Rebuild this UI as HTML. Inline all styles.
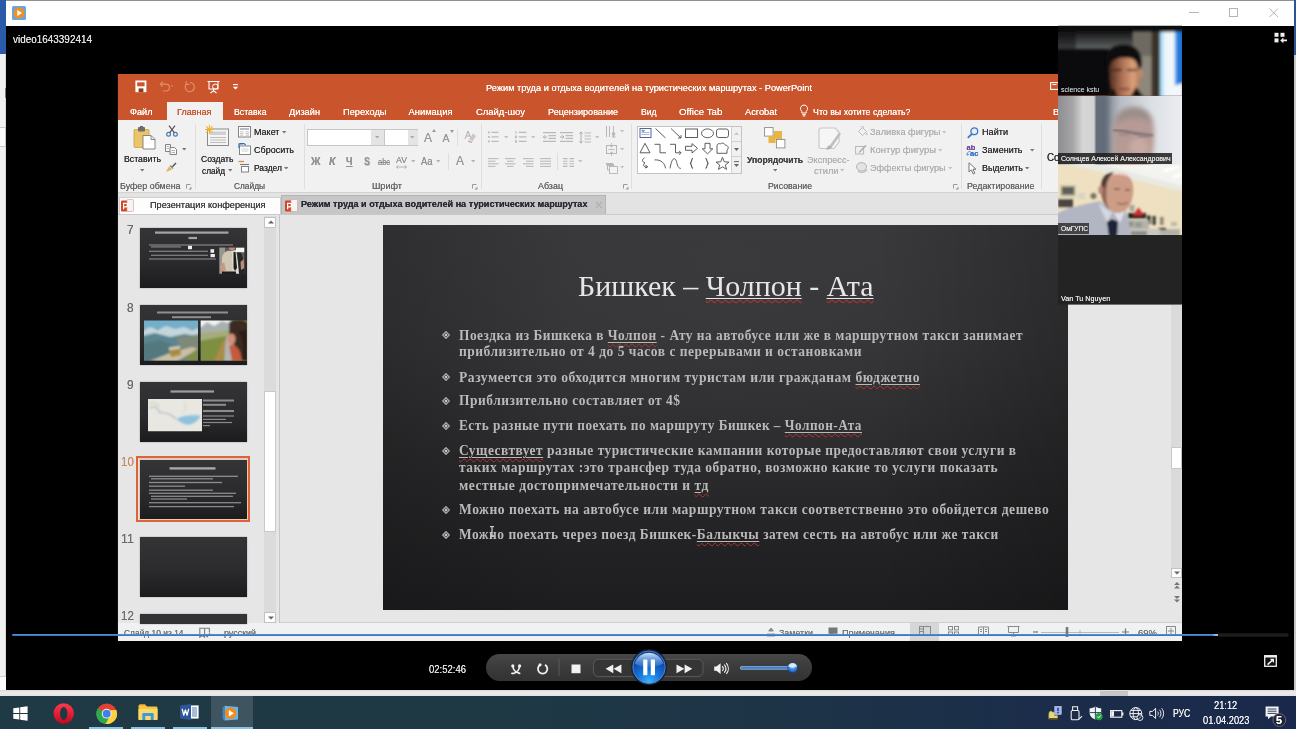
<!DOCTYPE html>
<html lang="ru"><head><meta charset="utf-8"><title>video1643392414</title>
<style>
html,body{margin:0;padding:0;background:#000;}
body{width:1296px;height:729px;overflow:hidden;position:relative;font-family:"Liberation Sans",sans-serif;}
.a{position:absolute;display:block;}
.t{position:absolute;white-space:pre;line-height:1;transform-origin:0 0;font-family:"Liberation Sans",sans-serif;}
.t{text-shadow:0 0 0.35px currentColor;}
.f{font-family:"Liberation Serif",serif;text-shadow:none;}
</style></head>
<body>
<!-- frame -->
<div class="a" style="left:0px;top:0px;width:1296px;height:1px;background:#8b9098;"></div>
<div class="a" style="left:6px;top:1px;width:1288px;height:24.5px;background:#ffffff;"></div>
<div class="a" style="left:0px;top:0px;width:6px;height:54px;background:#2a5ba8;"></div>
<div class="a" style="left:0px;top:54px;width:6px;height:642px;background:#f0f0f0;"></div>
<div class="a" style="left:5px;top:54px;width:1px;height:636px;background:#d8d8d8;"></div>
<div class="a" style="left:1294px;top:0px;width:2px;height:55px;background:#2a5597;"></div>
<div class="a" style="left:1294px;top:55px;width:2px;height:641px;background:#c4c7cc;"></div>
<div class="a" style="left:6px;top:25.5px;width:1288px;height:664.5px;background:#000;"></div>
<div class="a" style="left:0px;top:690px;width:1296px;height:6px;background:linear-gradient(180deg,#d9d9d9 0%,#ececec 45%,#e4e4e4 100%);"></div>
<div class="a" style="left:1100px;top:690.5px;width:28px;height:5px;background:#c6c6c6;"></div>
<div class="a" style="left:4.6px;top:88px;width:1.4px;height:10px;background:#7a7a7a;"></div>
<div class="a" style="left:0px;top:676px;width:5.5px;height:14px;background:#fbfbfb;border-top:1px solid #cfcfcf;box-sizing:border-box;"></div>
<div class="a" style="left:0px;top:127px;width:5.5px;height:20px;background:#fafafa;border:1px solid #c8c8c8;border-left:0;box-sizing:border-box;"></div>
<svg class="a" style="left:12px;top:6px;" width="14" height="14" viewBox="0 0 14 14"><rect x="0" y="0" width="14" height="14" rx="1.5" fill="#6fa3dc"/><circle cx="7" cy="7" r="5.4" fill="#f2901f"/><path d="M5.3 4.1 L10 7 L5.3 9.9 Z" fill="#fff"/></svg>
<svg class="a" style="left:1185px;top:5px;" width="100" height="16" viewBox="0 0 100 16"><path d="M4 7.5 H14" stroke="#b4b4b4" stroke-width="1"/><rect x="44.5" y="3.5" width="8" height="8" fill="none" stroke="#b4b4b4" stroke-width="1"/><path d="M84.5 3.5 L93 12 M93 3.5 L84.5 12" stroke="#b4b4b4" stroke-width="1" fill="none"/></svg>
<span id="t0" class="t" style="left:13.00px;top:32.78px;font-size:11.60px;color:#e4e4e4;transform:scaleX(0.8568);">video1643392414</span>
<svg class="a" style="left:1274px;top:32px;" width="14" height="12" viewBox="0 0 14 12"><g fill="#f0f0f0"><rect x="0.5" y="0.8" width="4" height="4"/><rect x="6.5" y="0.8" width="4" height="4"/><rect x="0.5" y="6.4" width="4" height="4"/><path d="M6.2 8.4 L9.4 5.6 V7.5 H13 V9.3 H9.4 V11.2 Z"/></g></svg>
<!-- ppt_chrome -->
<div class="a" style="left:0;top:0;width:1296px;height:729px;filter:blur(0.55px);">
<div class="a" style="left:118px;top:74px;width:1064px;height:567px;background:#e6e6e6;"></div>
<div class="a" style="left:118px;top:74px;width:1064px;height:46px;background:#ca542b;"></div>
<svg class="a" style="left:134.7px;top:79.8px;" width="110" height="15" viewBox="0 0 110 15"><g fill="none" stroke="#fff" stroke-width="1.3">
    <rect x="0.4" y="0.5" width="11" height="11.7" fill="#fff" stroke="none"/><rect x="2.2" y="2.3" width="7.4" height="4" fill="#ca542b" stroke="none"/><rect x="3.6" y="8.4" width="4.8" height="3.8" fill="#8a3c18" stroke="none"/>
    <g stroke="#e08c6c" stroke-width="1.2"><path d="M25.5 4.2 H31 a3.3 3.3 0 0 1 0 6.8 H28"/><path d="M27.8 1.8 L25.3 4.2 L27.8 6.6"/><path d="M36 6 h2" />
    <path d="M55 2.5 a4.6 4.6 0 1 1 -3.8 1.7"/><path d="M51.2 1 V4.4 H54.4"/></g>
    <path d="M72.5 1.5 H84.5 M74 2 V9 H83 V2 M78.5 9 V11 M75.5 13 L78.5 10.8 L81.5 13" stroke-width="1.1"/><circle cx="80.2" cy="6.6" r="2.6" stroke-width="1"/>
    <path d="M98 4.6 H103" stroke-width="1.1"/></g><path d="M97.8 6.8 H103.2 L100.5 9.6 Z" fill="#fff"/></svg>
<span id="t1" class="t" style="left:486.00px;top:84.40px;font-size:9.10px;color:#fff;transform:scaleX(1.0158);">Режим труда и отдыха водителей на туристических маршрутах - PowerPoint</span>
<svg class="a" style="left:1050px;top:82px;" width="9" height="8" viewBox="0 0 9 8"><rect x="0.6" y="0.6" width="7.8" height="6.8" fill="none" stroke="#fff" stroke-width="1.1"/><path d="M2.5 2.6 H6.5" stroke="#fff" stroke-width="1"/></svg>
<div class="a" style="left:167px;top:102px;width:55.5px;height:18px;background:#f1f1f1;"></div>
<span id="t2" class="t" style="left:130.00px;top:107.04px;font-size:9.40px;color:#fff;transform:scaleX(0.9756);">Файл</span>
<span id="t3" class="t" style="left:177.00px;top:107.04px;font-size:9.40px;color:#c4532e;transform:scaleX(0.9667);">Главная</span>
<span id="t4" class="t" style="left:234.00px;top:107.04px;font-size:9.40px;color:#fff;transform:scaleX(0.9323);">Вставка</span>
<span id="t5" class="t" style="left:289.00px;top:107.04px;font-size:9.40px;color:#fff;transform:scaleX(0.9836);">Дизайн</span>
<span id="t6" class="t" style="left:342.50px;top:107.04px;font-size:9.40px;color:#fff;transform:scaleX(0.9890);">Переходы</span>
<span id="t7" class="t" style="left:408.50px;top:107.04px;font-size:9.40px;color:#fff;">Анимация</span>
<span id="t8" class="t" style="left:475.50px;top:107.04px;font-size:9.40px;color:#fff;transform:scaleX(1.0080);">Слайд-шоу</span>
<span id="t9" class="t" style="left:547.50px;top:107.04px;font-size:9.40px;color:#fff;transform:scaleX(0.9670);">Рецензирование</span>
<span id="t10" class="t" style="left:641.00px;top:107.04px;font-size:9.40px;color:#fff;transform:scaleX(0.9134);">Вид</span>
<span id="t11" class="t" style="left:679.00px;top:107.04px;font-size:9.40px;color:#fff;transform:scaleX(1.0340);">Office Tab</span>
<span id="t12" class="t" style="left:745.00px;top:107.04px;font-size:9.40px;color:#fff;transform:scaleX(0.9903);">Acrobat</span>
<span id="t13" class="t" style="left:813.00px;top:107.04px;font-size:9.40px;color:#fff;transform:scaleX(0.9408);">Что вы хотите сделать?</span>
<span id="t14" class="t" style="left:1053.00px;top:107.04px;font-size:9.40px;color:#fff;">В</span>
<svg class="a" style="left:799px;top:104px;" width="10" height="13" viewBox="0 0 10 13"><path d="M5 1 a3.6 3.6 0 0 1 2.2 6.4 V9 H2.8 V7.4 A3.6 3.6 0 0 1 5 1 Z M3.2 10.6 H6.8 M3.8 12 H6.2" fill="none" stroke="#fff" stroke-width="1"/></svg>
<div class="a" style="left:118px;top:120px;width:1064px;height:73px;background:#f1f1f1;"></div>
<div class="a" style="left:118px;top:192px;width:1064px;height:1px;background:#d2d2d2;"></div>
<div class="a" style="left:118px;top:193px;width:1064px;height:22px;background:#e3e3e3;"></div>
<div class="a" style="left:119px;top:196.5px;width:161.5px;height:18px;background:#fdfdfd;border:1px solid #cfcfcf;box-sizing:border-box;"></div>
<div class="a" style="left:280.5px;top:195px;width:325.5px;height:19.5px;background:#c6c6c6;border:1px solid #b4b4b4;box-sizing:border-box;"></div>
<div class="a" style="left:118px;top:214px;width:1064px;height:1px;background:#c9c9c9;"></div>
<svg class="a" style="left:120.5px;top:199px;" width="13" height="14" viewBox="0 0 13 14"><rect x="0" y="1.5" width="9" height="11" rx="1" fill="#d24726"/><rect x="6" y="0.5" width="6.5" height="12" rx="0.8" fill="#f4f4f4" stroke="#d9a090" stroke-width="0.6"/><path d="M2.6 4.3 h2.3 a1.7 1.7 0 0 1 0 3.5 h-2.3 z M2.6 4.3 v6" stroke="#fff" stroke-width="1.2" fill="none"/></svg>
<svg class="a" style="left:285px;top:199px;" width="13" height="14" viewBox="0 0 13 14"><rect x="0" y="1.5" width="9" height="11" rx="1" fill="#d24726"/><rect x="6" y="0.5" width="6.5" height="12" rx="0.8" fill="#f4f4f4" stroke="#d9a090" stroke-width="0.6"/><path d="M2.6 4.3 h2.3 a1.7 1.7 0 0 1 0 3.5 h-2.3 z M2.6 4.3 v6" stroke="#fff" stroke-width="1.2" fill="none"/></svg>
<span id="t15" class="t" style="left:150.00px;top:200.07px;font-size:9.60px;color:#3c3c3c;transform:scaleX(0.9560);">Презентация конференция</span>
<span id="t16" class="t" style="left:300.50px;top:200.41px;font-size:9.20px;color:#2a2a34;font-weight:700;transform:scaleX(0.9893);">Режим труда и отдыха водителей на туристических маршрутах</span>
<svg class="a" style="left:595px;top:201px;" width="8" height="8" viewBox="0 0 8 8"><path d="M1 1 L7 7 M7 1 L1 7" stroke="#b0b0b0" stroke-width="1.2"/></svg>
<div class="a" style="left:118px;top:215px;width:161px;height:408px;background:#e6e6e6;"></div>
<div class="a" style="left:279px;top:215px;width:1px;height:408px;background:#c6c6c6;"></div>
<div class="a" style="left:280px;top:215px;width:902px;height:408px;background:#e6e6e6;"></div>
<div class="a" style="left:280px;top:621.5px;width:902px;height:1px;background:#d0d0d0;"></div>
<div class="a" style="left:264.3px;top:216px;width:11.7px;height:407px;background:#dbdbdb;"></div>
<div class="a" style="left:264.3px;top:216.5px;width:11.7px;height:11px;background:#fdfdfd;border:1px solid #c2c2c2;box-sizing:border-box;"></div>
<svg class="a" style="left:266.5px;top:219px;" width="8" height="6" viewBox="0 0 8 6"><path d="M1 4.5 L4 1.5 L7 4.5 Z" fill="#666"/></svg>
<div class="a" style="left:264.3px;top:391px;width:11.7px;height:141px;background:#ffffff;border:1px solid #c8c8c8;box-sizing:border-box;"></div>
<div class="a" style="left:264.3px;top:611.5px;width:11.7px;height:11px;background:#fdfdfd;border:1px solid #c2c2c2;box-sizing:border-box;"></div>
<svg class="a" style="left:266.5px;top:614.5px;" width="8" height="6" viewBox="0 0 8 6"><path d="M1 1.5 L4 4.5 L7 1.5 Z" fill="#666"/></svg>
<div class="a" style="left:1170.5px;top:305px;width:11.5px;height:272px;background:#dadada;"></div>
<div class="a" style="left:1170.5px;top:447px;width:11.5px;height:22px;background:#ffffff;border:1px solid #c8c8c8;box-sizing:border-box;"></div>
<div class="a" style="left:1170.5px;top:568px;width:11.5px;height:9.5px;background:#fdfdfd;border:1px solid #c2c2c2;box-sizing:border-box;"></div>
<svg class="a" style="left:1172.5px;top:570px;" width="8" height="6" viewBox="0 0 8 6"><path d="M1 1.5 L4 4.5 L7 1.5 Z" fill="#666"/></svg>
<svg class="a" style="left:1172.5px;top:581px;" width="8" height="22" viewBox="0 0 8 22"><path d="M1 4 L4 1 L7 4 Z M1 7.5 L4 4.5 L7 7.5 Z M1 15 L4 18 L7 15 Z M1 18.5 L4 21.5 L7 18.5 Z" fill="#777"/></svg>
<div class="a" style="left:118px;top:623px;width:1064px;height:18px;background:#f1f1f1;"></div>
<span id="t17" class="t" style="left:124.00px;top:628.14px;font-size:9.40px;color:#747474;transform:scaleX(0.8964);">Слайд 10 из 14</span>
<svg class="a" style="left:199px;top:626.5px;" width="12" height="12" viewBox="0 0 12 12"><path d="M0.8 1.2 H5.6 V10.2 L3.2 8.6 L0.8 10.2 Z M5.6 1.2 H10.4 V5.4" fill="none" stroke="#7c7c7c" stroke-width="1.1"/><path d="M6.6 8 L8.2 9.8 L11 6" fill="none" stroke="#7c7c7c" stroke-width="1.1"/></svg>
<span id="t18" class="t" style="left:223.50px;top:628.14px;font-size:9.40px;color:#747474;transform:scaleX(0.9508);">русский</span>
<svg class="a" style="left:766px;top:627px;" width="10" height="10" viewBox="0 0 10 10"><path d="M1 7 H9 M1 9 H9 M5 1 L7.4 4 H2.6 Z" stroke="#8a8a8a" fill="#8a8a8a" stroke-width="0.9"/></svg>
<span id="t19" class="t" style="left:778.50px;top:628.14px;font-size:9.40px;color:#747474;transform:scaleX(0.9481);">Заметки</span>
<svg class="a" style="left:828px;top:627px;" width="10" height="10" viewBox="0 0 10 10"><path d="M0.5 0.5 H9.5 V6.8 H5 L2.5 9 V6.8 H0.5 Z" fill="#777"/></svg>
<span id="t20" class="t" style="left:842.00px;top:628.14px;font-size:9.40px;color:#747474;transform:scaleX(0.9789);">Примечания</span>
<div class="a" style="left:910px;top:623px;width:29px;height:18px;background:#d6d6d6;"></div>
<svg class="a" style="left:910px;top:623px;" width="120" height="18" viewBox="0 0 120 18"><g fill="none" stroke="#8a8a8a" stroke-width="1">
    <rect x="9.5" y="3.5" width="11" height="9"/><path d="M13.5 3.5 V12.5 M9.5 6 H13.5 M9.5 8.5 H13.5"/>
    <rect x="38.5" y="3.5" width="4" height="3.4"/><rect x="44.5" y="3.5" width="4" height="3.4"/><rect x="38.5" y="9" width="4" height="3.4"/><rect x="44.5" y="9" width="4" height="3.4"/>
    <path d="M68.5 4 H78.5 V12 H68.5 Z M73.5 4 V12 M70 6.5 H72 M70 8.5 H72 M75 6.5 H77 M75 8.5 H77"/>
    <path d="M97.5 3.5 H109.5 M98.5 4 V9.5 H108.5 V4 M103.5 9.5 V12 M101 13 H106"/></g></svg>
<svg class="a" style="left:1030px;top:623px;" width="152" height="18" viewBox="0 0 152 18"><path d="M3 9 H8" stroke="#777" stroke-width="1.2"/><path d="M11 9.5 H89" stroke="#b8b8b8" stroke-width="1"/>
    <rect x="35.7" y="4" width="2.6" height="10" fill="#777"/><path d="M50 7 V12" stroke="#b8b8b8"/><path d="M92 9 H99 M95.5 5.5 V12.5" stroke="#777" stroke-width="1.2"/>
    <g fill="none" stroke="#8a8a8a" stroke-width="1"><rect x="136.5" y="3.5" width="9" height="9"/><path d="M141 5 V11 M138 8 H144"/></g></svg>
<span id="t21" class="t" style="left:1138.00px;top:628.14px;font-size:9.40px;color:#747474;transform:scaleX(1.0125);">69%</span>
<div class="a" style="left:117px;top:74px;width:1px;height:567px;background:#111;"></div>
<!-- ribbon -->
<svg class="a" style="left:132.5px;top:126px;" width="23" height="24" viewBox="0 0 23 24"><rect x="1" y="3.5" width="15" height="18" rx="1" fill="#e9c46a" stroke="#c9a142" stroke-width="0.8"/>
    <rect x="5" y="1" width="7" height="4.5" rx="1" fill="#6d6d6d"/><rect x="7" y="0" width="3" height="2.5" fill="#6d6d6d"/>
    <path d="M10 9.5 H18 L22 13.5 V23 H10 Z" fill="#fff" stroke="#7a7a7a" stroke-width="0.9"/><path d="M18 9.5 V13.5 H22" fill="none" stroke="#7a7a7a" stroke-width="0.9"/></svg>
<span id="t22" class="t" style="left:123.50px;top:154.34px;font-size:9.40px;color:#303030;transform:scaleX(0.9308);">Вставить</span>
<svg class="a" style="left:139.8px;top:169.2px;" width="4.4" height="2.6" viewBox="0 0 4.4 2.6"><path d="M0 0 H4.4 L2.2 2.6 Z" fill="#777"/></svg>
<svg class="a" style="left:165.8px;top:125px;" width="12" height="12" viewBox="0 0 12 12"><g fill="none" stroke="#4a7ab8" stroke-width="1.2"><circle cx="2.6" cy="9.3" r="1.9"/><circle cx="9.4" cy="9.3" r="1.9"/></g><path d="M3.6 7.8 L9 0.6 M8.4 7.8 L3 0.6" stroke="#555" stroke-width="1.2"/></svg>
<svg class="a" style="left:165px;top:144px;" width="13" height="11" viewBox="0 0 13 11"><g fill="#f8f8f8" stroke="#777" stroke-width="0.9"><path d="M0.5 0.5 H5.5 V7.5 H0.5 Z"/><path d="M5 3.5 H9.5 L11.5 5.5 V10.5 H5 Z"/></g><path d="M1.8 2.5 H4.2 M1.8 4.5 H4.2 M6.5 6.5 H10 M6.5 8.5 H10" stroke="#999" stroke-width="0.7"/></svg>
<svg class="a" style="left:181.8px;top:148.2px;" width="4.4" height="2.6" viewBox="0 0 4.4 2.6"><path d="M0 0 H4.4 L2.2 2.6 Z" fill="#777"/></svg>
<svg class="a" style="left:165px;top:162px;" width="12" height="11" viewBox="0 0 12 11"><path d="M1 10 L4 4.5 L7 7.5 Z" fill="#e5b44a"/><path d="M4.5 4 L7.5 7 L8.5 6 L5.5 3 Z" fill="#888"/><path d="M6.8 4.2 L10.5 0.6 L11.5 1.6 L7.8 5.2 Z" fill="#555"/></svg>
<span id="t23" class="t" style="left:119.50px;top:181.24px;font-size:9.40px;color:#666666;transform:scaleX(0.9497);">Буфер обмена</span>
<svg class="a" style="left:186px;top:183.5px;" width="6" height="6" viewBox="0 0 6 6"><path d="M0.5 4.5 V0.5 H4.5" fill="none" stroke="#9a9a9a" stroke-width="1"/><path d="M2.5 5.5 H5.5 V2.5 Z" fill="#9a9a9a"/></svg>
<div class="a" style="left:195px;top:124px;width:1px;height:65px;background:#dedede;"></div>
<svg class="a" style="left:205px;top:124.5px;" width="25" height="22" viewBox="0 0 25 22"><rect x="2.5" y="4" width="21" height="16.5" fill="#f4f4f4" stroke="#8a8a8a" stroke-width="1"/><rect x="5" y="6.5" width="16" height="3.4" fill="#cfcfcf"/>
    <path d="M5 12.5 H21 M5 15 H21 M5 17.5 H21" stroke="#bdbdbd" stroke-width="1"/>
    <path d="M4.5 0 V9 M0 4.5 H9 M1.3 1.3 L7.7 7.7 M7.7 1.3 L1.3 7.7" stroke="#f0b429" stroke-width="1.1"/></svg>
<span id="t24" class="t" style="left:201.00px;top:154.34px;font-size:9.40px;color:#303030;transform:scaleX(0.9119);">Создать</span>
<span id="t25" class="t" style="left:202.00px;top:166.34px;font-size:9.40px;color:#303030;transform:scaleX(0.8814);">слайд</span>
<svg class="a" style="left:227.8px;top:169.2px;" width="4.4" height="2.6" viewBox="0 0 4.4 2.6"><path d="M0 0 H4.4 L2.2 2.6 Z" fill="#777"/></svg>
<svg class="a" style="left:238px;top:126px;" width="13" height="12" viewBox="0 0 13 12"><rect x="0.5" y="0.5" width="12" height="10.5" fill="#fff" stroke="#777" stroke-width="0.9"/><rect x="2" y="2" width="9" height="2" fill="#bbb"/><path d="M2 5.8 H5.5 M2 7.6 H5.5 M2 9.2 H5.5 M7.5 5.8 H11 M7.5 7.6 H11 M7.5 9.2 H11" stroke="#aaa" stroke-width="0.7"/></svg>
<span id="t26" class="t" style="left:254.00px;top:126.94px;font-size:9.40px;color:#303030;transform:scaleX(0.9606);">Макет</span>
<svg class="a" style="left:282.3px;top:131.2px;" width="4.4" height="2.6" viewBox="0 0 4.4 2.6"><path d="M0 0 H4.4 L2.2 2.6 Z" fill="#777"/></svg>
<svg class="a" style="left:238px;top:143px;" width="13" height="12" viewBox="0 0 13 12"><rect x="1.5" y="3" width="11" height="8.5" fill="#fff" stroke="#777" stroke-width="0.9"/><path d="M3.5 6 H10.5 M3.5 8 H10.5" stroke="#bbb" stroke-width="0.7"/><path d="M1 5 V1 H5 M1 1.2 C3 -0.5 6.5 0 7.5 2.2" fill="none" stroke="#2f6db5" stroke-width="1.2"/></svg>
<span id="t27" class="t" style="left:254.00px;top:145.24px;font-size:9.40px;color:#303030;transform:scaleX(0.9599);">Сбросить</span>
<svg class="a" style="left:238px;top:160px;" width="13" height="13" viewBox="0 0 13 13"><path d="M0.5 1.5 H6" stroke="#e0883a" stroke-width="1.3"/><path d="M2 4.5 H11" stroke="#777" stroke-width="1"/><rect x="3.5" y="6.5" width="7" height="5.5" fill="#fff" stroke="#777" stroke-width="0.9"/></svg>
<span id="t28" class="t" style="left:254.00px;top:163.24px;font-size:9.40px;color:#303030;transform:scaleX(0.9032);">Раздел</span>
<svg class="a" style="left:284.3px;top:166.7px;" width="4.4" height="2.6" viewBox="0 0 4.4 2.6"><path d="M0 0 H4.4 L2.2 2.6 Z" fill="#777"/></svg>
<span id="t29" class="t" style="left:234.00px;top:181.24px;font-size:9.40px;color:#666666;transform:scaleX(0.8881);">Слайды</span>
<div class="a" style="left:303.5px;top:124px;width:1px;height:65px;background:#dedede;"></div>
<div class="a" style="left:307px;top:129px;width:111px;height:17px;background:#fff;border:1px solid #c6c6c6;box-sizing:border-box;"></div>
<div class="a" style="left:371px;top:130px;width:12.5px;height:15px;background:#e4e4e4;"></div>
<div class="a" style="left:383.5px;top:129px;width:1px;height:17px;background:#c6c6c6;"></div>
<div class="a" style="left:407.5px;top:130px;width:10px;height:15px;background:#e4e4e4;"></div>
<svg class="a" style="left:374.8px;top:136.2px;" width="4.4" height="2.6" viewBox="0 0 4.4 2.6"><path d="M0 0 H4.4 L2.2 2.6 Z" fill="#aaa"/></svg>
<svg class="a" style="left:410.3px;top:136.2px;" width="4.4" height="2.6" viewBox="0 0 4.4 2.6"><path d="M0 0 H4.4 L2.2 2.6 Z" fill="#aaa"/></svg>
<span id="t30" class="t" style="left:424.00px;top:131.84px;font-size:12.00px;color:#9a9a9a;">A</span>
<svg class="a" style="left:432px;top:129px;" width="4" height="3" viewBox="0 0 4 3"><path d="M0 3 L2 0 L4 3 Z" fill="#9a9a9a"/></svg>
<span id="t31" class="t" style="left:442.50px;top:133.11px;font-size:10.50px;color:#9a9a9a;">A</span>
<svg class="a" style="left:449.5px;top:130px;" width="4" height="3" viewBox="0 0 4 3"><path d="M0 0 L2 3 L4 0 Z" fill="#9a9a9a"/></svg>
<div class="a" style="left:456.5px;top:129px;width:1px;height:17px;background:#dedede;"></div>
<svg class="a" style="left:463.5px;top:130px;" width="12" height="13" viewBox="0 0 12 13"><path d="M4 1 L1 9 M4 1 L7 9 M2 6 H6" stroke="#b0b0b0" stroke-width="1" fill="none"/><path d="M5 9 L9 3.5 L12 6 L8.5 11.5 Z" fill="#c8c8c8"/><path d="M4 11 L8 12.5" stroke="#d6a8b4" stroke-width="1.5"/></svg>
<span id="t32" class="t" style="left:310.50px;top:156.50px;font-size:10.40px;color:#929292;font-weight:700;transform:scaleX(1.0100);">Ж</span>
<span id="t33" class="t" style="left:329.00px;top:156.50px;font-size:10.40px;color:#929292;font-weight:700;font-style:italic;transform:scaleX(1.0171);">К</span>
<span id="t34" class="t" style="left:346.00px;top:156.50px;font-size:10.40px;color:#929292;font-weight:700;transform:scaleX(0.8889);text-decoration:underline;">Ч</span>
<span id="t35" class="t" style="left:364.00px;top:156.50px;font-size:10.40px;color:#929292;font-weight:700;transform:scaleX(0.8649);text-shadow:0.7px 0.7px 0 #c4c4c4;">S</span>
<span id="t36" class="t" style="left:378.00px;top:157.80px;font-size:8.50px;color:#929292;transform:scaleX(0.8747);text-decoration:line-through;">abc</span>
<span id="t37" class="t" style="left:396.00px;top:155.46px;font-size:9.50px;color:#929292;transform:scaleX(0.9191);">AV</span>
<svg class="a" style="left:396px;top:164.5px;" width="11" height="4" viewBox="0 0 11 4"><path d="M0.5 2 H10.5 M2.5 0.3 L0.5 2 L2.5 3.7 M8.5 0.3 L10.5 2 L8.5 3.7" stroke="#a6a6a6" stroke-width="0.8" fill="none"/></svg>
<svg class="a" style="left:410.5px;top:160.2px;" width="4.4" height="2.6" viewBox="0 0 4.4 2.6"><path d="M0 0 H4.4 L2.2 2.6 Z" fill="#b4b4b4"/></svg>
<span id="t38" class="t" style="left:421.00px;top:156.50px;font-size:10.40px;color:#929292;transform:scaleX(0.9042);">Aa</span>
<svg class="a" style="left:435.8px;top:160.2px;" width="4.4" height="2.6" viewBox="0 0 4.4 2.6"><path d="M0 0 H4.4 L2.2 2.6 Z" fill="#b4b4b4"/></svg>
<div class="a" style="left:447.5px;top:153px;width:1px;height:17px;background:#dedede;"></div>
<span id="t39" class="t" style="left:456.00px;top:155.42px;font-size:12.50px;color:#9a9a9a;transform:scaleX(0.9588);">A</span>
<svg class="a" style="left:470.5px;top:160.2px;" width="4.4" height="2.6" viewBox="0 0 4.4 2.6"><path d="M0 0 H4.4 L2.2 2.6 Z" fill="#b4b4b4"/></svg>
<span id="t40" class="t" style="left:371.50px;top:181.24px;font-size:9.40px;color:#666666;transform:scaleX(0.9722);">Шрифт</span>
<svg class="a" style="left:472px;top:183.5px;" width="6" height="6" viewBox="0 0 6 6"><path d="M0.5 4.5 V0.5 H4.5" fill="none" stroke="#9a9a9a" stroke-width="1"/><path d="M2.5 5.5 H5.5 V2.5 Z" fill="#9a9a9a"/></svg>
<div class="a" style="left:480.5px;top:124px;width:1px;height:65px;background:#dedede;"></div>
<svg class="a" style="left:488px;top:131px;" width="11" height="12" viewBox="0 0 11 12"><g fill="#bababa"><rect x="0" y="0.5" width="1.8" height="1.8"/><rect x="0" y="5" width="1.8" height="1.8"/><rect x="0" y="9.5" width="1.8" height="1.8"/></g><path d="M3.5 1.4 H10.5 M3.5 5.9 H10.5 M3.5 10.4 H10.5" stroke="#bababa" stroke-width="1.1"/></svg>
<svg class="a" style="left:503.8px;top:136.2px;" width="4.4" height="2.6" viewBox="0 0 4.4 2.6"><path d="M0 0 H4.4 L2.2 2.6 Z" fill="#c2c2c2"/></svg>
<svg class="a" style="left:514.5px;top:131px;" width="12" height="12" viewBox="0 0 12 12"><g fill="#bababa"><rect x="0.4" y="0" width="1" height="2.8"/><rect x="0" y="4.6" width="1.8" height="2.6"/><rect x="0" y="9.2" width="1.8" height="2.6"/></g><path d="M3.8 1.4 H11.5 M3.8 5.9 H11.5 M3.8 10.4 H11.5" stroke="#bababa" stroke-width="1.1"/></svg>
<svg class="a" style="left:530.8px;top:136.2px;" width="4.4" height="2.6" viewBox="0 0 4.4 2.6"><path d="M0 0 H4.4 L2.2 2.6 Z" fill="#c2c2c2"/></svg>
<svg class="a" style="left:542.5px;top:132px;" width="13" height="10" viewBox="0 0 13 10"><path d="M0 0.6 H13 M5.5 3.6 H13 M5.5 6.4 H13 M0 9.4 H13" stroke="#bababa" stroke-width="1.1"/><path d="M4 5 H0.5 M2.2 3.2 L0.4 5 L2.2 6.8" stroke="#aeaeae" stroke-width="1" fill="none"/></svg>
<svg class="a" style="left:559.5px;top:132px;" width="13" height="10" viewBox="0 0 13 10"><path d="M0 0.6 H13 M5.5 3.6 H13 M5.5 6.4 H13 M0 9.4 H13" stroke="#bababa" stroke-width="1.1"/><path d="M0 5 H3.8 M2.1 3.2 L3.9 5 L2.1 6.8" stroke="#aeaeae" stroke-width="1" fill="none"/></svg>
<svg class="a" style="left:579px;top:130.5px;" width="12" height="13" viewBox="0 0 12 13"><path d="M2 1 V12 M0.3 2.8 L2 0.8 L3.7 2.8 M0.3 10.2 L2 12.2 L3.7 10.2" stroke="#aeaeae" stroke-width="1" fill="none"/><path d="M5.5 2 H12 M5.5 5 H12 M5.5 8 H12 M5.5 11 H12" stroke="#bababa" stroke-width="1.1"/></svg>
<svg class="a" style="left:594.5px;top:136.2px;" width="4.4" height="2.6" viewBox="0 0 4.4 2.6"><path d="M0 0 H4.4 L2.2 2.6 Z" fill="#c2c2c2"/></svg>
<svg class="a" style="left:604.5px;top:125px;" width="12" height="13" viewBox="0 0 12 13"><path d="M1.5 1 V12 M4.5 1 V12" stroke="#b6b6b6" stroke-width="1"/><path d="M8.5 12 L7 8 H10 Z M8.5 1 V8" stroke="#b6b6b6" fill="#b6b6b6" stroke-width="0.9"/><path d="M7 12 H10.5" stroke="#b6b6b6"/></svg>
<svg class="a" style="left:620.3px;top:130.2px;" width="4.4" height="2.6" viewBox="0 0 4.4 2.6"><path d="M0 0 H4.4 L2.2 2.6 Z" fill="#c2c2c2"/></svg>
<svg class="a" style="left:604.5px;top:143px;" width="13" height="13" viewBox="0 0 13 13"><rect x="1.5" y="2.5" width="10" height="8" fill="none" stroke="#b6b6b6" stroke-width="1"/><path d="M6.5 0 V4 M5 2.5 L6.5 4.2 L8 2.5 M6.5 13 V9 M5 10.5 L6.5 8.8 L8 10.5 M3.5 6.5 H9.5" stroke="#b6b6b6" stroke-width="0.9" fill="none"/></svg>
<svg class="a" style="left:620.3px;top:148.2px;" width="4.4" height="2.6" viewBox="0 0 4.4 2.6"><path d="M0 0 H4.4 L2.2 2.6 Z" fill="#c2c2c2"/></svg>
<svg class="a" style="left:604.5px;top:160.5px;" width="14" height="13" viewBox="0 0 14 13"><path d="M0.5 2 H8 L9.5 5 H2 Z" fill="#b6b6b6"/><rect x="4.5" y="5.5" width="8" height="7" fill="#f4f4f4" stroke="#b6b6b6" stroke-width="0.9"/><path d="M2.5 5 V9 H4.5" stroke="#b6b6b6" fill="none"/></svg>
<svg class="a" style="left:620.3px;top:166.2px;" width="4.4" height="2.6" viewBox="0 0 4.4 2.6"><path d="M0 0 H4.4 L2.2 2.6 Z" fill="#c2c2c2"/></svg>
<svg class="a" style="left:488px;top:157.5px;" width="14" height="11.4" viewBox="0 0 14 11.4"><path d="M0 0.6 H10.5" stroke="#bababa" stroke-width="1.1"/><path d="M0 3.2 H7.5" stroke="#bababa" stroke-width="1.1"/><path d="M0 5.8 H10.5" stroke="#bababa" stroke-width="1.1"/><path d="M0 8.4 H7.5" stroke="#bababa" stroke-width="1.1"/></svg>
<svg class="a" style="left:505px;top:157.5px;" width="14" height="11.4" viewBox="0 0 14 11.4"><path d="M0 0.6 H10.5" stroke="#bababa" stroke-width="1.1"/><path d="M2 3.2 H8.5" stroke="#bababa" stroke-width="1.1"/><path d="M0 5.8 H10.5" stroke="#bababa" stroke-width="1.1"/><path d="M2 8.4 H8.5" stroke="#bababa" stroke-width="1.1"/></svg>
<svg class="a" style="left:522.5px;top:157.5px;" width="14" height="11.4" viewBox="0 0 14 11.4"><path d="M0 0.6 H10.5" stroke="#bababa" stroke-width="1.1"/><path d="M3 3.2 H10.5" stroke="#bababa" stroke-width="1.1"/><path d="M0 5.8 H10.5" stroke="#bababa" stroke-width="1.1"/><path d="M3 8.4 H10.5" stroke="#bababa" stroke-width="1.1"/></svg>
<svg class="a" style="left:539.5px;top:157.5px;" width="14" height="11.4" viewBox="0 0 14 11.4"><path d="M0 0.6 H11" stroke="#bababa" stroke-width="1.1"/><path d="M0 3.2 H11" stroke="#bababa" stroke-width="1.1"/><path d="M0 5.8 H11" stroke="#bababa" stroke-width="1.1"/><path d="M0 8.4 H11" stroke="#bababa" stroke-width="1.1"/></svg>
<div class="a" style="left:556.5px;top:153px;width:1px;height:17px;background:#dedede;"></div>
<svg class="a" style="left:563px;top:157.5px;" width="11" height="10" viewBox="0 0 11 10"><path d="M0 0.6 H4.5 M0 3.2 H4.5 M0 5.8 H4.5 M0 8.4 H4.5 M6.5 0.6 H11 M6.5 3.2 H11 M6.5 5.8 H11 M6.5 8.4 H11" stroke="#bababa" stroke-width="1.1"/></svg>
<svg class="a" style="left:577.8px;top:160.2px;" width="4.4" height="2.6" viewBox="0 0 4.4 2.6"><path d="M0 0 H4.4 L2.2 2.6 Z" fill="#c2c2c2"/></svg>
<span id="t41" class="t" style="left:538.00px;top:181.24px;font-size:9.40px;color:#666666;transform:scaleX(0.9501);">Абзац</span>
<svg class="a" style="left:622.5px;top:183.5px;" width="6" height="6" viewBox="0 0 6 6"><path d="M0.5 4.5 V0.5 H4.5" fill="none" stroke="#9a9a9a" stroke-width="1"/><path d="M2.5 5.5 H5.5 V2.5 Z" fill="#9a9a9a"/></svg>
<div class="a" style="left:631px;top:124px;width:1px;height:65px;background:#dedede;"></div>
<div class="a" style="left:636.5px;top:126px;width:105.5px;height:47.5px;background:#fff;border:1px solid #c4c4c4;box-sizing:border-box;"></div>
<div class="a" style="left:731.5px;top:127px;width:9.5px;height:45.5px;background:#f1f1f1;"></div>
<div class="a" style="left:731px;top:127px;width:0.8px;height:45.5px;background:#d0d0d0;"></div>
<div class="a" style="left:731.5px;top:141px;width:9.5px;height:0.8px;background:#d0d0d0;"></div>
<div class="a" style="left:731.5px;top:156px;width:9.5px;height:0.8px;background:#d0d0d0;"></div>
<svg class="a" style="left:734px;top:132px;" width="5" height="3" viewBox="0 0 5 3"><path d="M0 3 L2.5 0 L5 3 Z" fill="#c8c8c8"/></svg>
<svg class="a" style="left:734px;top:148px;" width="5" height="3" viewBox="0 0 5 3"><path d="M0 0 H5 L2.5 3 Z" fill="#666"/></svg>
<svg class="a" style="left:734px;top:160.5px;" width="5" height="7" viewBox="0 0 5 7"><path d="M0 0.6 H5" stroke="#666"/><path d="M0 3 H5 L2.5 6 Z" fill="#666"/></svg>
<svg class="a" style="left:636.5px;top:126px;" width="96" height="48" viewBox="0 0 96 48"><g fill="none" stroke="#555" stroke-width="0.95">
    <g transform="translate(0,-0.5)">
    <rect x="3" y="3" width="11" height="9" stroke="#46619a"/><path d="M4.5 5 H8 M4.5 7 H12.5 M4.5 9 H12.5" stroke="#8a9ac0" stroke-width="0.7"/><path d="M5 4.2 L6 6.6 M7.2 4.2 L6.2 6.6" stroke="#46619a" stroke-width="0.6"/>
    <path d="M18.5 3 L28.5 12.5"/><path d="M34 3 L44 12.5 M44 9.6 V12.5 H41"/>
    <rect x="48.5" y="3.5" width="12" height="8.5"/><ellipse cx="70.5" cy="7.8" rx="6" ry="4.4"/><rect x="79.5" y="3.5" width="12" height="8.5" rx="2.2"/></g>
    <g transform="translate(0,-1.2)">
    <path d="M8 18.5 L13 28 H3 Z"/><path d="M17.5 19.5 H23 V28 H29"/><path d="M33 19.5 H38.5 V28 H44 M42 26 L44 28 L42 30"/>
    <path d="M48.5 21.5 H55 V18.8 L60.5 23.5 L55 28.2 V25.5 H48.5 Z"/><path d="M68 18.5 H73 V24 H75.8 L70.5 29 L65.2 24 H68 Z"/>
    <path d="M80 28.5 V21 C80 19 82 18.5 83.5 19 C84.5 18 87.5 18 88.5 20.5 C91.5 20.5 92 24 90 25 V28.5 Z"/></g>
    <g transform="translate(0,-2.6)">
    <path d="M7.5 34.5 C4.5 36 5 38.5 8 39.5 C5.5 41 6.5 44.5 10.5 43.5 M8.5 41.5 L10.5 43.5 L8 44.6" stroke-width="1"/>
    <path d="M17.5 36.5 C24 36 28 40 28.5 45"/><path d="M33 45 C35 33 38.5 33 40 40 C41 45 43 45 44 45"/>
    <path d="M56 35 C53.5 35.5 55.5 39.5 53 40 C55.5 40.5 53.5 44.5 56 45" stroke-width="1.1"/><path d="M68.5 35 C71 35.5 69 39.5 71.5 40 C69 40.5 71 44.5 68.5 45" stroke-width="1.1"/>
    <path d="M85.5 34 L87.3 38.4 L92 38.7 L88.3 41.6 L89.6 46 L85.5 43.4 L81.4 46 L82.7 41.6 L79 38.7 L83.7 38.4 Z"/></g></g></svg>
<svg class="a" style="left:763.5px;top:126.5px;" width="22" height="22" viewBox="0 0 22 22"><rect x="0.6" y="0.6" width="8.5" height="8.5" fill="#fff" stroke="#8a8a8a" stroke-width="0.9"/>
    <rect x="10" y="4" width="8" height="8" fill="#eab543"/><rect x="4.5" y="9" width="7" height="7" fill="#eab543"/>
    <rect x="12.4" y="12.4" width="8.5" height="8.5" fill="#fff" stroke="#8a8a8a" stroke-width="0.9"/></svg>
<span id="t42" class="t" style="left:746.50px;top:154.54px;font-size:9.40px;color:#444;font-weight:700;transform:scaleX(0.9187);">Упорядочить</span>
<svg class="a" style="left:772.8px;top:169.2px;" width="4.4" height="2.6" viewBox="0 0 4.4 2.6"><path d="M0 0 H4.4 L2.2 2.6 Z" fill="#777"/></svg>
<svg class="a" style="left:817.5px;top:127px;" width="24" height="24" viewBox="0 0 24 24"><path d="M3 1 H17 L21 5 V15 L16 21.5 H3 a2 2 0 0 1 -2 -2 V3 a2 2 0 0 1 2 -2 Z" fill="#f6f6f6" stroke="#c8c8c8" stroke-width="1.2"/>
    <path d="M12 18 L21 5.5 L23 7 L14.5 19.5 Z" fill="#c0c0c0"/><path d="M8 22.5 C9 19.5 11 18 12.5 18.3 L14.3 19.6 C13.5 22 11 23 8 22.5 Z" fill="#b4b4b4"/></svg>
<span id="t43" class="t" style="left:806.50px;top:154.54px;font-size:9.40px;color:#b0b0b0;transform:scaleX(0.9739);">Экспресс-</span>
<span id="t44" class="t" style="left:813.50px;top:166.34px;font-size:9.40px;color:#b0b0b0;transform:scaleX(0.9825);">стили</span>
<svg class="a" style="left:840.3px;top:169.2px;" width="4.4" height="2.6" viewBox="0 0 4.4 2.6"><path d="M0 0 H4.4 L2.2 2.6 Z" fill="#c0c0c0"/></svg>
<svg class="a" style="left:857px;top:126px;" width="11" height="11" viewBox="0 0 11 11"><path d="M1.5 5.5 L5.5 1.5 L9.5 5.5 L5.5 9.5 Z" fill="none" stroke="#b8b8b8" stroke-width="1"/><path d="M4 1 C4 -0.5 6.5 -0.5 6.5 1.5" fill="none" stroke="#b8b8b8" stroke-width="0.9"/><path d="M9.8 6.5 C10.8 8 10.8 9.3 9.8 9.3 C8.8 9.3 8.8 8 9.8 6.5Z" fill="#b8b8b8"/></svg>
<span id="t45" class="t" style="left:870.00px;top:127.14px;font-size:9.40px;color:#b0b0b0;transform:scaleX(0.9845);">Заливка фигуры</span>
<svg class="a" style="left:942.3px;top:131.2px;" width="4.4" height="2.6" viewBox="0 0 4.4 2.6"><path d="M0 0 H4.4 L2.2 2.6 Z" fill="#c4c4c4"/></svg>
<svg class="a" style="left:855px;top:144px;" width="12" height="11" viewBox="0 0 12 11"><rect x="0.6" y="2.5" width="8" height="7.5" fill="none" stroke="#b8b8b8" stroke-width="1"/><path d="M4 7.5 L10.5 0.8 L11.6 1.9 L5.2 8.4 L3.6 8.9 Z" fill="#b0b0b0"/></svg>
<span id="t46" class="t" style="left:870.00px;top:145.14px;font-size:9.40px;color:#b0b0b0;transform:scaleX(1.0067);">Контур фигуры</span>
<svg class="a" style="left:938.3px;top:149.2px;" width="4.4" height="2.6" viewBox="0 0 4.4 2.6"><path d="M0 0 H4.4 L2.2 2.6 Z" fill="#c4c4c4"/></svg>
<svg class="a" style="left:856px;top:162px;" width="12" height="11" viewBox="0 0 12 11"><ellipse cx="5.5" cy="4.8" rx="5" ry="4.2" fill="#e4e4e4" stroke="#b0b0b0" stroke-width="1"/><path d="M2 9 C5 11.5 9 10.5 11 7.5" stroke="#c0c0c0" stroke-width="1.4" fill="none"/></svg>
<span id="t47" class="t" style="left:870.00px;top:162.94px;font-size:9.40px;color:#b0b0b0;transform:scaleX(0.9662);">Эффекты фигуры</span>
<svg class="a" style="left:947.8px;top:166.9px;" width="4.4" height="2.6" viewBox="0 0 4.4 2.6"><path d="M0 0 H4.4 L2.2 2.6 Z" fill="#c4c4c4"/></svg>
<span id="t48" class="t" style="left:768.00px;top:181.24px;font-size:9.40px;color:#666666;transform:scaleX(0.9318);">Рисование</span>
<svg class="a" style="left:953px;top:183.5px;" width="6" height="6" viewBox="0 0 6 6"><path d="M0.5 4.5 V0.5 H4.5" fill="none" stroke="#9a9a9a" stroke-width="1"/><path d="M2.5 5.5 H5.5 V2.5 Z" fill="#9a9a9a"/></svg>
<div class="a" style="left:960.5px;top:124px;width:1px;height:65px;background:#dedede;"></div>
<svg class="a" style="left:966.5px;top:126.5px;" width="12" height="12" viewBox="0 0 12 12"><circle cx="7.3" cy="4.3" r="3.4" fill="#e8f1fb" stroke="#3b78c4" stroke-width="1.3"/><path d="M4.8 6.8 L0.8 10.8" stroke="#3b78c4" stroke-width="1.8"/></svg>
<span id="t49" class="t" style="left:981.50px;top:127.14px;font-size:9.40px;color:#303030;transform:scaleX(0.9714);">Найти</span>
<span id="t50" class="t" style="left:966.50px;top:143.85px;font-size:7.50px;color:#7a4ba0;font-weight:700;">ab</span>
<span id="t51" class="t" style="left:970.00px;top:149.85px;font-size:7.50px;color:#3b78c4;font-weight:700;">ac</span>
<svg class="a" style="left:965.5px;top:150.5px;" width="5" height="5" viewBox="0 0 5 5"><path d="M4.5 0.5 C1.5 0.5 1 2 1.5 4 M0.2 2.6 L1.5 4.3 L3 3" stroke="#3b78c4" stroke-width="0.8" fill="none"/></svg>
<span id="t52" class="t" style="left:981.50px;top:145.14px;font-size:9.40px;color:#303030;transform:scaleX(0.9611);">Заменить</span>
<svg class="a" style="left:1030.3px;top:149.2px;" width="4.4" height="2.6" viewBox="0 0 4.4 2.6"><path d="M0 0 H4.4 L2.2 2.6 Z" fill="#777"/></svg>
<svg class="a" style="left:968px;top:161.5px;" width="9" height="13" viewBox="0 0 9 13"><path d="M1 0.8 V10 L3.4 7.8 L5.2 12 L6.8 11.3 L5 7.2 H8 Z" fill="#fff" stroke="#666" stroke-width="0.9"/></svg>
<span id="t53" class="t" style="left:981.50px;top:162.94px;font-size:9.40px;color:#303030;transform:scaleX(0.9480);">Выделить</span>
<svg class="a" style="left:1025.3px;top:166.9px;" width="4.4" height="2.6" viewBox="0 0 4.4 2.6"><path d="M0 0 H4.4 L2.2 2.6 Z" fill="#777"/></svg>
<span id="t54" class="t" style="left:967.00px;top:181.24px;font-size:9.40px;color:#666666;transform:scaleX(0.9451);">Редактирование</span>
<div class="a" style="left:1041px;top:124px;width:1px;height:65px;background:#dedede;"></div>
<span id="t55" class="t" style="left:1046.50px;top:153.20px;font-size:10.40px;color:#303030;transform:scaleX(0.9401);">Со</span>
<!-- thumbs -->
<div class="a" style="left:140px;top:227.8px;width:107px;height:60px;background:linear-gradient(180deg,#343436 0%,#2b2b2d 55%,#1c1c1e 100%);box-shadow:0 0 1.5px rgba(0,0,0,0.35);"></div>
<div class="a" style="left:140px;top:305px;width:107px;height:60px;background:linear-gradient(180deg,#343436 0%,#2b2b2d 55%,#1c1c1e 100%);box-shadow:0 0 1.5px rgba(0,0,0,0.35);"></div>
<div class="a" style="left:140px;top:382.1px;width:107px;height:60px;background:linear-gradient(180deg,#343436 0%,#2b2b2d 55%,#1c1c1e 100%);box-shadow:0 0 1.5px rgba(0,0,0,0.35);"></div>
<div class="a" style="left:140px;top:459.5px;width:107px;height:60px;background:linear-gradient(180deg,#343436 0%,#2b2b2d 55%,#1c1c1e 100%);box-shadow:0 0 1.5px rgba(0,0,0,0.35);"></div>
<div class="a" style="left:140px;top:536.5px;width:107px;height:60px;background:linear-gradient(180deg,#343436 0%,#2b2b2d 55%,#1c1c1e 100%);box-shadow:0 0 1.5px rgba(0,0,0,0.35);"></div>
<div class="a" style="left:140px;top:613.6px;width:107px;height:10px;background:#333335;box-shadow:0 0 1.5px rgba(0,0,0,0.35);"></div>
<span id="t56" class="t" style="left:127.00px;top:224.30px;font-size:12.40px;color:#6c6c6c;transform:scaleX(0.9557);">7</span>
<span id="t57" class="t" style="left:127.00px;top:301.50px;font-size:12.40px;color:#6c6c6c;transform:scaleX(0.9557);">8</span>
<span id="t58" class="t" style="left:127.00px;top:378.60px;font-size:12.40px;color:#6c6c6c;transform:scaleX(0.9557);">9</span>
<span id="t59" class="t" style="left:120.80px;top:533.00px;font-size:12.40px;color:#6c6c6c;transform:scaleX(0.9942);">11</span>
<span id="t60" class="t" style="left:120.80px;top:610.10px;font-size:12.40px;color:#6c6c6c;transform:scaleX(0.9277);">12</span>
<span id="t61" class="t" style="left:120.80px;top:456.00px;font-size:12.40px;color:#cc8669;transform:scaleX(0.9277);">10</span>
<div class="a" style="left:136.3px;top:455.8px;width:114.1px;height:66.4px;background:transparent;border:2.5px solid #da653b;box-sizing:border-box;"></div>
<div class="a" style="left:138.6px;top:458.1px;width:109.5px;height:61.8px;background:transparent;border:1.2px solid #f2c6a9;box-sizing:border-box;"></div>
<svg class="a" style="left:0;top:0" width="280" height="625" viewBox="0 0 280 625"><defs><filter id="b1" x="-10%" y="-10%" width="120%" height="120%"><feGaussianBlur stdDeviation="0.55"/></filter><filter id="b2" x="-10%" y="-10%" width="120%" height="120%"><feGaussianBlur stdDeviation="1.1"/></filter><clipPath id="c7"><rect x="219.3" y="247.4" width="25.2" height="26.4"/></clipPath><clipPath id="c8a"><rect x="144" y="320.5" width="54" height="40.3"/></clipPath><clipPath id="c8b"><rect x="200.6" y="320.5" width="46.4" height="40.3"/></clipPath><clipPath id="c9"><rect x="148" y="399" width="54" height="32.5"/></clipPath></defs><g filter="url(#b1)"><rect x="155" y="231.5" width="73.5" height="2.2" fill="rgba(240,240,240,0.6)"/><rect x="188.5" y="236.9" width="8.5" height="2.2" fill="rgba(240,240,240,0.6)"/><rect x="149" y="244.4" width="84" height="1.2" fill="rgba(235,235,235,0.45)"/><rect x="151" y="246.3" width="30" height="1.2" fill="rgba(235,235,235,0.45)"/><rect x="149" y="250.7" width="59" height="1.2" fill="rgba(235,235,235,0.45)"/><rect x="151" y="254.7" width="57" height="1.2" fill="rgba(235,235,235,0.45)"/><rect x="149" y="258.4" width="67" height="1.2" fill="rgba(235,235,235,0.45)"/><rect x="188" y="245.8" width="4" height="3.4" fill="#eee"/><rect x="210.5" y="249.2" width="3.6" height="3.6" fill="#eee"/><rect x="210.5" y="254" width="4.4" height="3.2" fill="#eee"/></g><g clip-path="url(#c7)"><g filter="url(#b1)"><rect x="218" y="246" width="28" height="29" fill="#5d5a58"/><rect x="219" y="247" width="6" height="27" fill="#9a9690"/><path d="M222 274 V258 C223 252 227 250 231 251 L234 274 Z" fill="#cfc6b4"/><path d="M231 251 L236 250 L240 274 H233 Z" fill="#e3ddd0"/><path d="M233.5 252 L235.5 252 L237 268 L235 271 L233.5 268 Z" fill="#1c1c20"/><path d="M237 250 C241 251 244 255 244.5 274 H239 Z" fill="#26262a"/><ellipse cx="232" cy="247.5" rx="3" ry="3" fill="#b98d78"/><path d="M240.5 262 L243.5 259 L244.5 268 L241 270 Z" fill="#b98d78"/><path d="M220 266 L224 262 L226 270 L221 273 Z" fill="#c49a84"/><rect x="222" y="271.5" width="14" height="2.5" fill="#1a1a1c"/><rect x="236" y="247.4" width="8.5" height="4.8" fill="#f4f4f4"/></g></g><g filter="url(#b1)"><rect x="157" y="311.5" width="71" height="2" fill="rgba(235,235,235,0.5)"/><rect x="172" y="316.2" width="39" height="2" fill="rgba(235,235,235,0.5)"/></g><g clip-path="url(#c8a)"><g filter="url(#b2)"><rect x="142" y="318" width="58" height="45" fill="#567c88"/><rect x="142" y="318" width="58" height="11" fill="#74aecb"/><path d="M142 331 L150 327 L158 330 L166 326 L175 329 L184 327 L192 330 L200 328 V338 H142 Z" fill="#c4d6dc"/><path d="M142 336 L155 333 L170 337 L185 334 L200 337 V350 H142 Z" fill="#5d8590"/><path d="M142 344 L160 340 L175 346 L168 356 L150 361 H142 Z" fill="#53797f"/><path d="M176 338 L200 334 V352 L186 356 Z" fill="#7d8a78"/><path d="M150 361 L170 353 L192 347 L198 349 L178 361 Z" fill="#c9bfa4"/><path d="M182 361 L198 348 V361 Z" fill="#7f8f47"/><path d="M169 349 L180 347 L181 355 L171 357 Z" fill="#a98b3c"/><path d="M169 347.5 L180 346 L180 348.5 L169 350 Z" fill="#d8d3c4"/></g></g><g clip-path="url(#c8b)"><g filter="url(#b2)"><rect x="199" y="318" width="50" height="45" fill="#8b9447"/><rect x="199" y="318" width="32" height="9" fill="#f1f3f4"/><path d="M199 329 L207 322 L214 326 L222 321 L232 324 V334 H199 Z" fill="#a9b0b0"/><path d="M199 333 L230 330 V340 L199 342 Z" fill="#a5ad7c"/><path d="M199 341 L226 336 L226 361 H199 Z" fill="#7f8f3f"/><path d="M214 361 L224 340 L227 340 L222 361 Z" fill="#b08a4a"/><path d="M224 361 L226 338 L231 338 L233 361 Z" fill="#b4b6b6"/><path d="M229 322 C236 318 247 319 248 324 V361 H240 C240 350 234 345 229 338 Z" fill="#3b2a22"/><ellipse cx="231.5" cy="339" rx="4" ry="5.5" fill="#d48f78"/><path d="M229 346 C233 344 238 347 240 352 L242 361 H232 Z" fill="#c55a3c"/><path d="M238 332 C242 334 244 345 243 361 H248 V330 Z" fill="#2a1d18"/></g></g><g filter="url(#b1)"><rect x="170.5" y="390.4" width="43.5" height="2.2" fill="rgba(235,235,235,0.58)"/><rect x="203" y="399.5" width="31" height="2" fill="rgba(235,235,235,0.5)"/><rect x="203" y="403.8" width="23" height="2" fill="rgba(235,235,235,0.5)"/><rect x="203" y="409.95" width="31" height="2.1" fill="rgba(235,235,235,0.5)"/><rect x="203" y="415.4" width="31" height="1.2" fill="rgba(235,235,235,0.5)"/><rect x="203" y="418.8" width="23" height="1.2" fill="rgba(235,235,235,0.5)"/><rect x="203" y="421.9" width="29" height="1.2" fill="rgba(235,235,235,0.5)"/><rect x="203" y="425" width="7" height="1.2" fill="rgba(235,235,235,0.5)"/></g><g clip-path="url(#c9)"><rect x="148" y="399" width="54" height="32.5" fill="#e9e7e1"/><g filter="url(#b2)"><path d="M176.5 419 C181 415.5 192 414.5 200.5 415.5 C199 420 193 425.5 186 424.5 C182 423.5 179 421.5 176.5 419 Z" fill="#8ec1dd"/><path d="M150 408 C155 405 158 408 160 413 C166 412 172 415 176 419" fill="none" stroke="#a9b7c2" stroke-width="1.1"/><path d="M149 404 C153 401 158 403 159 407" fill="none" stroke="#cfd9b8" stroke-width="1.5"/><path d="M184 401 C187 406 186 410 183 414" fill="none" stroke="#d5d3cc" stroke-width="1"/></g></g><g filter="url(#b1)"><rect x="169.5" y="467.2" width="46" height="2.4" fill="rgba(238,238,238,0.62)"/><rect x="149" y="475.65" width="89" height="1.3" fill="rgba(235,235,235,0.5)"/><rect x="151" y="478.15" width="62" height="1.3" fill="rgba(235,235,235,0.5)"/><rect x="149" y="481.85" width="73" height="1.3" fill="rgba(235,235,235,0.5)"/><rect x="149" y="485.55" width="36" height="1.3" fill="rgba(235,235,235,0.5)"/><rect x="149" y="489.55" width="64" height="1.3" fill="rgba(235,235,235,0.5)"/><rect x="149" y="492.65" width="87" height="1.3" fill="rgba(235,235,235,0.5)"/><rect x="151" y="495.65" width="82" height="1.3" fill="rgba(235,235,235,0.5)"/><rect x="151" y="498.35" width="36" height="1.3" fill="rgba(235,235,235,0.5)"/><rect x="149" y="502.05" width="92" height="1.3" fill="rgba(235,235,235,0.5)"/><rect x="149" y="505.95" width="85" height="1.3" fill="rgba(235,235,235,0.5)"/></g></svg>
<!-- slide -->
<div class="a" style="left:383px;top:225px;width:685px;height:385px;background:linear-gradient(90deg,rgba(0,0,0,0.16) 0%,rgba(0,0,0,0) 28%,rgba(0,0,0,0) 72%,rgba(0,0,0,0.2) 100%),radial-gradient(ellipse 60% 60% at 50% 20%, rgba(68,68,70,0.32) 0%, rgba(60,60,62,0) 100%),linear-gradient(180deg,#373739 0%,#333335 30%,#29292b 62%,#1d1d1f 100%);"></div>
<span id="t62" class="t f" style="left:578.00px;top:272.16px;font-size:29.30px;color:#e6e6e6;transform:scaleX(1.0213);">Бишкек – <span style="text-decoration:underline wavy #b3352f 1px;text-underline-offset:2.5px;"><span style="text-decoration:underline solid currentColor 1px;text-underline-offset:1.5px;">Чолпон</span></span> - <span style="text-decoration:underline wavy #b3352f 1px;text-underline-offset:2.5px;"><span style="text-decoration:underline solid currentColor 1px;text-underline-offset:1.5px;">Ата</span></span></span>
<span id="t63" class="t f" style="left:459.00px;top:327.52px;font-size:14.30px;color:#b9b9b9;font-weight:700;transform:scaleX(0.9344);letter-spacing:0.55px;">Поездка из Бишкека в <span style="text-decoration:underline wavy #b3352f 1px;text-underline-offset:2.5px;"><span style="text-decoration:underline solid currentColor 1px;text-underline-offset:1.5px;">Чолпон</span></span> - Ату на автобусе или же в маршрутном такси занимает</span>
<svg class="a" style="left:442px;top:331.1px;" width="8" height="8" viewBox="0 0 8 8"><path d="M4 0.7 L7.3 4 L4 7.3 L0.7 4 Z" fill="#4a4a4c" stroke="#a4a4a4" stroke-width="1.4"/><circle cx="4" cy="4" r="1" fill="#f0f0f0"/></svg>
<span id="t64" class="t f" style="left:459.00px;top:344.32px;font-size:14.30px;color:#b9b9b9;font-weight:700;transform:scaleX(0.9433);letter-spacing:0.55px;">приблизительно от 4 до 5 часов с перерывами и остановками</span>
<span id="t65" class="t f" style="left:459.00px;top:369.52px;font-size:14.30px;color:#b9b9b9;font-weight:700;transform:scaleX(0.9500);letter-spacing:0.55px;">Разумеется это обходится многим туристам или гражданам <span style="text-decoration:underline wavy #b3352f 1px;text-underline-offset:2.5px;"><span style="text-decoration:underline solid currentColor 1px;text-underline-offset:1.5px;">бюджетно</span></span></span>
<svg class="a" style="left:442px;top:373.1px;" width="8" height="8" viewBox="0 0 8 8"><path d="M4 0.7 L7.3 4 L4 7.3 L0.7 4 Z" fill="#4a4a4c" stroke="#a4a4a4" stroke-width="1.4"/><circle cx="4" cy="4" r="1" fill="#f0f0f0"/></svg>
<span id="t66" class="t f" style="left:459.00px;top:393.22px;font-size:14.30px;color:#b9b9b9;font-weight:700;transform:scaleX(0.9407);letter-spacing:0.55px;">Приблизительно составляет от 4$</span>
<svg class="a" style="left:442px;top:396.8px;" width="8" height="8" viewBox="0 0 8 8"><path d="M4 0.7 L7.3 4 L4 7.3 L0.7 4 Z" fill="#4a4a4c" stroke="#a4a4a4" stroke-width="1.4"/><circle cx="4" cy="4" r="1" fill="#f0f0f0"/></svg>
<span id="t67" class="t f" style="left:459.00px;top:418.12px;font-size:14.30px;color:#b9b9b9;font-weight:700;transform:scaleX(0.9261);letter-spacing:0.55px;">Есть разные пути поехать по маршруту Бишкек – <span style="text-decoration:underline wavy #b3352f 1px;text-underline-offset:2.5px;"><span style="text-decoration:underline solid currentColor 1px;text-underline-offset:1.5px;">Чолпон-Ата</span></span></span>
<svg class="a" style="left:442px;top:421.7px;" width="8" height="8" viewBox="0 0 8 8"><path d="M4 0.7 L7.3 4 L4 7.3 L0.7 4 Z" fill="#4a4a4c" stroke="#a4a4a4" stroke-width="1.4"/><circle cx="4" cy="4" r="1" fill="#f0f0f0"/></svg>
<span id="t68" class="t f" style="left:459.00px;top:443.02px;font-size:14.30px;color:#b9b9b9;font-weight:700;transform:scaleX(0.9373);letter-spacing:0.55px;"><span style="text-decoration:underline wavy #b3352f 1px;text-underline-offset:2.5px;"><span style="text-decoration:underline solid currentColor 1px;text-underline-offset:1.5px;">Сущесвтвует</span></span> разные туристические кампании которые предоставляют свои услуги в</span>
<svg class="a" style="left:442px;top:446.6px;" width="8" height="8" viewBox="0 0 8 8"><path d="M4 0.7 L7.3 4 L4 7.3 L0.7 4 Z" fill="#4a4a4c" stroke="#a4a4a4" stroke-width="1.4"/><circle cx="4" cy="4" r="1" fill="#f0f0f0"/></svg>
<span id="t69" class="t f" style="left:459.00px;top:460.32px;font-size:14.30px;color:#b9b9b9;font-weight:700;transform:scaleX(0.9417);letter-spacing:0.55px;">таких маршрутах :это трансфер туда обратно, возможно какие то услуги показать</span>
<span id="t70" class="t f" style="left:459.00px;top:477.72px;font-size:14.30px;color:#b9b9b9;font-weight:700;transform:scaleX(0.9514);letter-spacing:0.55px;">местные достопримечательности и <span style="text-decoration:underline wavy #b3352f 1px;text-underline-offset:2.5px;"><span style="text-decoration:underline solid currentColor 1px;text-underline-offset:1.5px;">тд</span></span></span>
<span id="t71" class="t f" style="left:459.00px;top:502.22px;font-size:14.30px;color:#b9b9b9;font-weight:700;transform:scaleX(0.9481);letter-spacing:0.55px;">Можно поехать на автобусе или маршрутном такси соответственно это обойдется дешево</span>
<svg class="a" style="left:442px;top:505.8px;" width="8" height="8" viewBox="0 0 8 8"><path d="M4 0.7 L7.3 4 L4 7.3 L0.7 4 Z" fill="#4a4a4c" stroke="#a4a4a4" stroke-width="1.4"/><circle cx="4" cy="4" r="1" fill="#f0f0f0"/></svg>
<span id="t72" class="t f" style="left:459.00px;top:527.12px;font-size:14.30px;color:#b9b9b9;font-weight:700;transform:scaleX(0.9365);letter-spacing:0.55px;">Можно поехать через поезд Бишкек-<span style="text-decoration:underline wavy #b3352f 1px;text-underline-offset:2.5px;"><span style="text-decoration:underline solid currentColor 1px;text-underline-offset:1.5px;">Балыкчы</span></span> затем сесть на автобус или же такси</span>
<svg class="a" style="left:442px;top:530.7px;" width="8" height="8" viewBox="0 0 8 8"><path d="M4 0.7 L7.3 4 L4 7.3 L0.7 4 Z" fill="#4a4a4c" stroke="#a4a4a4" stroke-width="1.4"/><circle cx="4" cy="4" r="1" fill="#f0f0f0"/></svg>
<svg class="a" style="left:488.5px;top:526px;" width="6" height="11" viewBox="0 0 6 11"><path d="M1 0.6 H5 M3 0.6 V10.4 M1 10.4 H5" stroke="#c4c4c4" stroke-width="1.3" fill="none"/></svg>
<!-- cams -->
<svg class="a" style="left:0;top:0" width="1296" height="310" viewBox="0 0 1296 310"><defs><filter id="cb" x="-10%" y="-10%" width="120%" height="120%"><feGaussianBlur stdDeviation="1.6"/></filter><filter id="cb2" x="-10%" y="-10%" width="120%" height="120%"><feGaussianBlur stdDeviation="0.9"/></filter><filter id="cb3" x="-10%" y="-10%" width="120%" height="120%"><feGaussianBlur stdDeviation="2.6"/></filter><clipPath id="k1"><rect x="1058" y="25.8" width="124" height="69.9"/></clipPath><clipPath id="k2"><rect x="1058" y="95.7" width="124" height="69"/></clipPath><clipPath id="k3"><rect x="1058" y="164.7" width="124" height="70.3"/></clipPath><linearGradient id="g1w" x1="0" y1="0" x2="0" y2="1"><stop offset="0" stop-color="#161618"/><stop offset="1" stop-color="#5f6464"/></linearGradient><linearGradient id="g1win" x1="0" y1="0" x2="1" y2="0"><stop offset="0" stop-color="#8fd0f2"/><stop offset="0.22" stop-color="#eef5fb"/><stop offset="0.58" stop-color="#f4f7fb"/><stop offset="0.68" stop-color="#2a86e2"/><stop offset="1" stop-color="#1668d0"/></linearGradient><linearGradient id="g1f" x1="0" y1="0" x2="1" y2="0"><stop offset="0" stop-color="#4d2b20"/><stop offset="0.4" stop-color="#a86c50"/><stop offset="0.78" stop-color="#dca07a"/><stop offset="1" stop-color="#b07c5c"/></linearGradient><linearGradient id="g2bg" x1="0" y1="0" x2="1" y2="0"><stop offset="0" stop-color="#8e8e90"/><stop offset="0.12" stop-color="#a6a6a8"/><stop offset="0.2" stop-color="#d6d6d6"/><stop offset="0.29" stop-color="#d2d2d2"/><stop offset="0.31" stop-color="#646d79"/><stop offset="0.4" stop-color="#757d88"/><stop offset="0.45" stop-color="#9ea4ac"/><stop offset="0.5" stop-color="#b8bcc2"/><stop offset="0.75" stop-color="#dcdfe4"/><stop offset="1" stop-color="#eceef1"/></linearGradient></defs><g clip-path="url(#k1)"><rect x="1058" y="25.8" width="124" height="70" fill="#0b0b0e"/><g filter="url(#cb)"><rect x="1056" y="32" width="82" height="17" fill="url(#g1w)"/><rect x="1133" y="30" width="20" height="70" fill="#6e6a62"/><rect x="1139" y="56" width="13" height="44" fill="#8d877c"/><rect x="1151.5" y="28" width="9" height="72" fill="#3a3128"/><rect x="1160" y="31" width="24" height="70" fill="url(#g1win)"/><path d="M1173 86 L1183 83 V100 H1168 Z" fill="#f3f6fa"/><rect x="1056" y="24" width="130" height="8" fill="#0b0b0e"/><rect x="1056" y="30" width="20" height="20" fill="#0b0b0e" opacity="0.45"/><path d="M1109 60 C1110 52 1140 52 1140 62 V78 C1140 88 1136 97 1130 100 H1116 C1111 95 1109 84 1109 74 Z" fill="url(#g1f)"/><ellipse cx="1141" cy="74" rx="2" ry="4" fill="#c08a68"/><path d="M1106 66 C1104 50 1112 44 1124 44.5 C1136 44 1143 52 1142 66 C1140 68 1139 69 1138.5 70 C1138 62 1134 58 1128 58 C1120 57 1114 59 1111 63 C1110 66 1109.5 68 1109 71 C1107 70 1106 68 1106 66 Z" fill="#0d0b0b"/><path d="M1112 70 H1122 M1127 70 H1137" stroke="#3a2018" stroke-width="2.2"/><path d="M1120 89 H1130" stroke="#7a4030" stroke-width="1.8"/><path d="M1130 97 L1136 87 L1144 97 Z" fill="#0a0a0c"/><path d="M1108 97 C1108 90 1112 86 1115 90 L1118 97 Z" fill="#1a1210"/></g></g><g clip-path="url(#k2)"><rect x="1058" y="95.7" width="124" height="69" fill="url(#g2bg)"/><g filter="url(#cb3)"><rect x="1100" y="95" width="6" height="70" fill="#5f6976"/><path d="M1113 136 C1111 118 1120 107 1134 107 C1148 107 1156 118 1154 138 C1154 150 1152 160 1148 168 H1116 C1113 158 1113 146 1113 136 Z" fill="#b59a95"/><path d="M1115 124 C1116 112 1124 107 1134 107 C1145 107 1152 113 1153 124 C1146 116 1124 116 1115 124 Z" fill="#9a8e8a"/><ellipse cx="1139" cy="147" rx="10" ry="9" fill="#c7aaa3"/></g><g filter="url(#cb2)"><path d="M1113 130 C1120 130.5 1128 131 1133 133 C1140 134 1147 134.5 1153 135.5" stroke="#6f6464" stroke-width="1.8" fill="none"/><path d="M1119 134.5 H1130 M1138 137 H1149" stroke="#9a8a88" stroke-width="2.4" fill="none"/></g></g><g clip-path="url(#k3)"><rect x="1058" y="164.7" width="124" height="71" fill="#eee0c0"/><g filter="url(#cb2)"><path d="M1066 164 H1183 V192 C1160 186 1120 176 1066 164 Z" fill="#e9e9e4"/><path d="M1100 164 H1183 V186 C1160 180 1130 172 1100 164 Z" fill="#f3f3f0"/><path d="M1162 170 L1178 165 L1180 167.5 L1165 172.5 Z M1172 176 L1182 172.5 V175.5 L1174 178.5 Z" fill="#ffffff"/><rect x="1168" y="190" width="15" height="46" fill="#ece0c2"/><rect x="1060.5" y="185.5" width="15" height="10.5" fill="#b9b59a"/><rect x="1062" y="187" width="12" height="7.5" fill="#5d5f56"/><rect x="1058" y="197" width="18" height="1.6" fill="#d8d2bc"/><rect x="1058" y="199" width="15" height="8.5" fill="#4c4540"/><rect x="1078" y="193" width="7" height="6" fill="#d9d3c3"/><circle cx="1093.5" cy="196" r="3" fill="#7a7464"/><rect x="1058" y="208" width="12" height="3" fill="#e6e0cc"/><rect x="1128" y="213" width="18" height="5.5" fill="#23211f"/><path d="M1132.5 215.5 L1138.5 207.5 L1144 215.5 Z" fill="#cf2f31"/><rect x="1129.5" y="205" width="5" height="6.5" fill="#a9a79c"/><rect x="1147" y="215.5" width="3.6" height="8.5" fill="#33302c"/><rect x="1152.5" y="216" width="3.2" height="9" fill="#3b3833"/><rect x="1160" y="217" width="3.6" height="8" fill="#8d887a"/><rect x="1125" y="220" width="24" height="9" fill="#b5b3a8"/><rect x="1127" y="221.5" width="6" height="5" fill="#8b8f86"/><rect x="1135" y="222" width="7" height="5.5" fill="#9a9c94"/><rect x="1158" y="229" width="22" height="7" fill="#b3b0a8"/><rect x="1158" y="228" width="8" height="2" fill="#2a2826"/><rect x="1171" y="222" width="6" height="4" fill="#bdb8a6"/><rect x="1120" y="229" width="40" height="7" fill="#c9c7c2"/><rect x="1131" y="231" width="16" height="5" fill="#8f8d8a"/><path d="M1056 214 C1070 206 1088 204 1100 201 L1112 212 L1124 206 C1128 214 1130 226 1131 237 H1056 Z" fill="#b2b6c3"/><path d="M1098 203 L1107 222 L1112 213 Z" fill="#d5d8e0"/><path d="M1114 213 L1120 223 L1126 208 Z" fill="#dfe1e8"/><path d="M1101 192 C1099 178 1108 171.5 1118 172 C1129 172.5 1135 181 1133 194 C1132 204 1127 212 1119 213 C1109 213 1102 203 1101 192 Z" fill="#cc9c86"/><path d="M1101 192 C1099 180 1105 173 1113 172.5 C1108 178 1106 186 1106.5 196 C1106 200 1107 206 1110 210 C1104 206 1101.5 199 1101 192 Z" fill="#8f6857"/><path d="M1102 186 C1101 177 1107 172 1114 172 C1109 176 1105.5 181 1105 188 Z" fill="#4a3a35"/><ellipse cx="1100.5" cy="190" rx="2.2" ry="4" fill="#b98774"/><path d="M1113 172.5 C1119 170.5 1126 173 1129 177 C1124 174.5 1118 174 1113 175 Z" fill="#f0d8cc"/><path d="M1114 189 H1120 M1125 190 H1130" stroke="#7a5446" stroke-width="1.6"/><path d="M1117 203 C1121 205 1125 204.5 1128 202" stroke="#9b6a5a" stroke-width="1.5" fill="none"/><path d="M1107 222 L1112 219 L1118 221.5 L1117 237 H1109 Z" fill="#1d2138"/></g></g><rect x="1058" y="235" width="124" height="69.6" fill="#232323"/></svg>
<span id="t73" class="t" style="left:1060.80px;top:85.53px;font-size:8.00px;color:#f2f2f2;transform:scaleX(0.8676);text-shadow:0 0 1.5px #000;">science kstu</span>
<div class="a" style="left:1058px;top:153.4px;width:114px;height:10.6px;background:rgba(30,30,30,0.86);"></div>
<span id="t74" class="t" style="left:1060.80px;top:155.31px;font-size:7.90px;color:#e2e2e2;transform:scaleX(0.8882);">Солнцев Алексей Александрович</span>
<div class="a" style="left:1058px;top:223px;width:31px;height:11px;background:rgba(52,52,52,0.88);"></div>
<span id="t75" class="t" style="left:1060.80px;top:225.11px;font-size:7.90px;color:#e6e6e6;transform:scaleX(0.8380);">ОмГУПС</span>
<span id="t76" class="t" style="left:1060.80px;top:294.83px;font-size:8.00px;color:#e6e6e6;transform:scaleX(0.9017);">Van Tu Nguyen</span>
</div>
<!-- player -->
<div class="a" style="left:1218px;top:633.8px;width:69.5px;height:2.4px;background:#1c1c1c;border-radius:1.2px;box-shadow:0 0 0 0.6px #2c2c2c;"></div>
<div class="a" style="left:12.3px;top:633.6px;width:1206px;height:2.7px;background:linear-gradient(180deg,#5f98dc 0%,#3f7fd3 50%,#3370c4 100%);border-radius:1.3px;"></div>
<div class="a" style="left:1212px;top:633.6px;width:6px;height:2.7px;background:linear-gradient(90deg,rgba(255,255,255,0),rgba(200,225,255,0.9));border-radius:1.5px;"></div>
<span id="t77" class="t" style="left:429.00px;top:663.69px;font-size:11.00px;color:#e4e4e4;transform:scaleX(0.8639);">02:52:46</span>
<div class="a" style="left:486px;top:654px;width:326px;height:27px;background:linear-gradient(180deg,#474747 0%,#3b3b3b 50%,#333 100%);border-radius:13.5px;"></div>
<svg class="a" style="left:486px;top:649px" width="330" height="38" viewBox="0 0 330 38"><g fill="none" stroke="#f2f2f2" stroke-width="1.6" stroke-linecap="round"><path d="M26.9 17.2 C27.2 21 30 23.6 33.7 24.4"/><path d="M33.5 17.2 C33.2 21 30.4 23.6 27.6 24.4 H25.9"/></g><circle cx="26.8" cy="16.9" r="1.6" fill="#f2f2f2"/><circle cx="33.6" cy="16.9" r="1.6" fill="#f2f2f2"/><path d="M54.3 15.9 A4.7 4.7 0 1 0 59 15.9" fill="none" stroke="#f2f2f2" stroke-width="1.8"/><circle cx="54.1" cy="15.7" r="1.5" fill="#f2f2f2"/><rect x="72.5" y="10" width="1" height="17" fill="#5a5a5a"/><rect x="85.5" y="15.5" width="9" height="8.7" fill="#f2f2f2"/><rect x="107.5" y="10.3" width="109.5" height="17.3" rx="5" fill="#353535" stroke="#5b5b5b" stroke-width="1"/><path d="M119.6 19.8 L127.3 15.4 V24.2 Z M127.6 19.8 L135.4 15.4 V24.2 Z" fill="#f2f2f2"/><path d="M206.3 19.8 L198.6 15.4 V24.2 Z M198.3 19.8 L190.5 15.4 V24.2 Z" fill="#f2f2f2"/><path d="M228.2 17.4 H230.4 L234.6 14.2 V25 L230.4 21.8 H228.2 Z" fill="#f2f2f2"/><path d="M236.3 17.2 C237.5 18.6 237.5 20.6 236.3 22 M238.3 15.6 C240.3 18 240.3 21.2 238.3 23.6 M240.3 14.2 C243 17.4 243 21.8 240.3 25" fill="none" stroke="#f2f2f2" stroke-width="1.15"/><rect x="254" y="16.9" width="56" height="3.8" rx="1.6" fill="#8fa6c4"/><rect x="255" y="17.8" width="50" height="2" rx="1" fill="#3d7fd6"/><defs><radialGradient id="vk" cx="0.5" cy="0.3" r="0.7"><stop offset="0" stop-color="#bfe0ff"/><stop offset="0.5" stop-color="#3f8fe6"/><stop offset="1" stop-color="#1659b8"/></radialGradient><radialGradient id="pb" cx="0.5" cy="0.95" r="0.95"><stop offset="0" stop-color="#39b4ff"/><stop offset="0.35" stop-color="#1878dc"/><stop offset="0.75" stop-color="#0d48a8"/><stop offset="1" stop-color="#0c3a8c"/></radialGradient><linearGradient id="pg" x1="0" y1="0" x2="0" y2="1"><stop offset="0" stop-color="#d8ecff" stop-opacity="0.95"/><stop offset="1" stop-color="#6fb0f0" stop-opacity="0.25"/></linearGradient></defs><circle cx="306.6" cy="18.8" r="4.9" fill="url(#vk)" stroke="#0f3f8a" stroke-width="0.6"/><path d="M302.2 17.6 A4.5 4.5 0 0 1 311 17.6 C308 19 305 19 302.2 17.6 Z" fill="#e6f2ff" opacity="0.85"/><circle cx="163" cy="18.2" r="18" fill="#1a2238"/><circle cx="163" cy="18.2" r="16.2" fill="url(#pb)" stroke="#5d8fd6" stroke-width="0.8"/><path d="M148.6 14.5 A15 15 0 0 1 177.4 14.5 C170 19 156 19 148.6 14.5 Z" fill="url(#pg)"/><rect x="157.2" y="10.6" width="4.2" height="15.6" rx="0.8" fill="#fff"/><rect x="164.8" y="10.6" width="4.2" height="15.6" rx="0.8" fill="#fff"/></svg>
<svg class="a" style="left:1264px;top:655px;" width="13" height="12" viewBox="0 0 13 12"><rect x="0.7" y="0.7" width="11.6" height="10.6" fill="#111" stroke="#f0f0f0" stroke-width="1.3"/><rect x="0.7" y="0.7" width="11.6" height="1.8" fill="#f0f0f0"/><path d="M3.6 9.6 L9 4.6" stroke="#f0f0f0" stroke-width="1.6"/><path d="M5.8 3.8 H10 V8 Z" fill="#f0f0f0"/></svg>
<!-- taskbar -->
<div class="a" style="left:0px;top:696px;width:1296px;height:33px;background:linear-gradient(90deg,#1f3a45 0%,#1f3944 35%,#1d3447 60%,#1b2d4a 80%,#1a294b 100%);"></div>
<div class="a" style="left:211px;top:696px;width:41.5px;height:33px;background:rgba(255,255,255,0.14);"></div>
<div class="a" style="left:88.5px;top:727.2px;width:34.5px;height:1.8px;background:#8cc3ea;"></div>
<div class="a" style="left:130.5px;top:727.2px;width:34.5px;height:1.8px;background:#8cc3ea;"></div>
<div class="a" style="left:172.5px;top:727.2px;width:34.5px;height:1.8px;background:#8cc3ea;"></div>
<div class="a" style="left:211px;top:727.2px;width:41.5px;height:1.8px;background:#8cc3ea;"></div>
<svg class="a" style="left:13px;top:705.5px;" width="15" height="15" viewBox="0 0 15 15"><path d="M0.3 2.3 L6.3 1.4 V7.1 H0.3 Z M7.2 1.3 L14.6 0.2 V7.1 H7.2 Z M0.3 7.9 H6.3 V13.6 L0.3 12.7 Z M7.2 7.9 H14.6 V14.8 L7.2 13.7 Z" fill="#fff"/></svg>
<svg class="a" style="left:53px;top:702.5px;" width="22" height="21" viewBox="0 0 22 21"><defs><linearGradient id="op" x1="0" y1="0" x2="0" y2="1"><stop offset="0" stop-color="#ff3b4a"/><stop offset="1" stop-color="#c3071f"/></linearGradient></defs><ellipse cx="10.7" cy="10.5" rx="10.2" ry="10.2" fill="url(#op)"/><ellipse cx="10.7" cy="10.5" rx="3.7" ry="6.5" fill="#1f3944"/></svg>
<svg class="a" style="left:95.5px;top:702.5px;" width="22" height="22" viewBox="0 0 22 22"><circle cx="10.7" cy="10.7" r="10.3" fill="#e34133"/><path d="M10.7 10.7 L1.8 5.6 A10.3 10.3 0 0 0 6 19.9 L10.7 10.7 Z" fill="#2da94f"/><path d="M1.8 5.6 A10.3 10.3 0 0 0 10 21 L14.8 13 L6.2 13.2 Z" fill="#2da94f"/><path d="M21 10.7 A10.3 10.3 0 0 1 9.6 20.95 L15.2 10.7 Z" fill="#fdd23e"/><path d="M20.3 7 A10.3 10.3 0 0 1 9.6 20.95 L14.9 12.6 L15 7 Z" fill="#fdd23e"/><circle cx="10.7" cy="10.7" r="4.9" fill="#f1f1f1"/><circle cx="10.7" cy="10.7" r="3.9" fill="#3f7fe8"/></svg>
<svg class="a" style="left:138px;top:704px;" width="20" height="17" viewBox="0 0 20 17"><path d="M0.5 2.2 Q0.5 0.6 2 0.6 H7 L9 2.6 H18 Q19.5 2.6 19.5 4 V15 H0.5 Z" fill="#f6c445"/><path d="M0.5 5 H19.5 V16 H0.5 Z" fill="#fbd969"/><path d="M4.3 16 V10.2 Q4.3 9 5.5 9 H14.5 Q15.7 9 15.7 10.2 V16 Z" fill="#3d9ad8"/><rect x="7.3" y="12" width="5.4" height="4" fill="#fbd969"/><path d="M0.5 2.2 Q0.5 0.6 2 0.6 H7 L8 1.6 H0.5 Z" fill="#e9a82c"/></svg>
<svg class="a" style="left:180px;top:704px;" width="19" height="16" viewBox="0 0 19 16"><rect x="8" y="1.6" width="10.4" height="12.8" fill="#fff" stroke="#c9d4ea" stroke-width="0.5"/><path d="M12 4 H17 M12 6 H17 M12 8 H17 M12 10 H17 M12 12 H17" stroke="#2b579a" stroke-width="0.8"/><path d="M0 1.6 L11 0 V16 L0 14.4 Z" fill="#2b579a"/><path d="M2.2 4.8 L3.7 11.2 L5.4 6 L7.1 11.2 L8.7 4.8" fill="none" stroke="#fff" stroke-width="1.3" stroke-linejoin="round"/></svg>
<svg class="a" style="left:221.5px;top:705px;" width="18" height="16" viewBox="0 0 18 16"><path d="M2.5 0.8 L16 2 V14.6 L2.5 15.6 Z" fill="#6db3e6"/><path d="M2.5 0.8 L0.6 2.4 V14 L2.5 15.6 Z" fill="#3f86c4"/><circle cx="8.6" cy="8.2" r="5.7" fill="#f28a1c"/><path d="M6.8 5 L12 8.2 L6.8 11.4 Z" fill="#fff"/></svg>
<svg class="a" style="left:1047.5px;top:706px;" width="14" height="14" viewBox="0 0 14 14"><path d="M0.8 13 V8.6 C0.8 5 3.2 4.2 4.4 6 C6.2 5.4 7.2 7.4 6.6 9.4 H9.6 V13 Z" fill="#e8d87a" stroke="#a89430" stroke-width="0.6"/><rect x="6.8" y="0.4" width="6.4" height="8" fill="#9fb4f0" stroke="#dfe6fb" stroke-width="0.5"/><rect x="9.3" y="1.8" width="1.4" height="3.4" fill="#1a2f9a"/><rect x="9.3" y="6" width="1.4" height="1.3" fill="#1a2f9a"/><path d="M1 12.6 H10" stroke="#5a4a12" stroke-width="1"/></svg>
<svg class="a" style="left:1070px;top:705.5px;" width="13" height="15" viewBox="0 0 13 15"><g fill="none" stroke="#f2f2f2" stroke-width="1.05"><path d="M2.6 4.4 V0.8 H7.6 V4.4"/><rect x="1.2" y="4.4" width="7.8" height="9.4" rx="1.2"/><path d="M8.8 13.4 L12 10.2"/></g></svg>
<svg class="a" style="left:1089px;top:706px;" width="14" height="14.5" viewBox="0 0 14 14.5"><path d="M6.4 0.4 C8 1.6 10 2.2 12.2 2.2 V6.5 C12.2 10 9.6 12.4 6.4 13.6 C3.2 12.4 0.6 10 0.6 6.5 V2.2 C2.8 2.2 4.8 1.6 6.4 0.4 Z" fill="#f4f4f4"/><path d="M6.4 0.6 V13.4 M0.8 6.6 H12" stroke="#1b2d4a" stroke-width="0.9"/><circle cx="10" cy="10.6" r="3.6" fill="#21a243"/><path d="M8.3 10.6 L9.6 11.9 L11.8 9.4" stroke="#fff" stroke-width="1" fill="none"/></svg>
<svg class="a" style="left:1109.5px;top:709.5px;" width="14" height="8" viewBox="0 0 14 8"><rect x="0.6" y="0.6" width="11.2" height="6.6" fill="none" stroke="#f2f2f2" stroke-width="1.1"/><rect x="12" y="2.4" width="1.4" height="3" fill="#f2f2f2"/><rect x="1.2" y="1.2" width="2.8" height="5.4" fill="#f2f2f2"/></svg>
<svg class="a" style="left:1129px;top:706.5px;" width="14.5" height="14" viewBox="0 0 14.5 14"><g fill="none" stroke="#f2f2f2" stroke-width="1"><circle cx="6.8" cy="6.6" r="6"/><ellipse cx="6.8" cy="6.6" rx="2.7" ry="6"/><path d="M0.8 6.6 H12.8 M1.8 3.4 H11.8 M1.8 9.8 H8"/></g><circle cx="11" cy="10.6" r="2.9" fill="#1b2d4a" stroke="#f2f2f2" stroke-width="0.9"/><path d="M9.2 12.4 L12.8 8.8" stroke="#f2f2f2" stroke-width="0.8"/></svg>
<svg class="a" style="left:1149px;top:707px;" width="15.5" height="13" viewBox="0 0 15.5 13"><path d="M0.8 4.4 H3.4 L6.6 1.4 V11.4 L3.4 8.4 H0.8 Z" fill="none" stroke="#f2f2f2" stroke-width="1"/><path d="M8.6 4.6 C9.6 5.8 9.6 7.2 8.6 8.4 M10.6 2.8 C12.4 5 12.4 8 10.6 10.2 M12.6 1.2 C15.2 4.4 15.2 8.6 12.6 11.8" fill="none" stroke="#f2f2f2" stroke-width="1"/></svg>
<span id="t78" class="t" style="left:1173.00px;top:708.60px;font-size:10.40px;color:#f2f2f2;transform:scaleX(0.8312);">РУС</span>
<span id="t79" class="t" style="left:1214.00px;top:700.50px;font-size:10.40px;color:#f2f2f2;transform:scaleX(0.8956);">21:12</span>
<span id="t80" class="t" style="left:1202.60px;top:715.80px;font-size:10.40px;color:#f2f2f2;transform:scaleX(0.8920);">01.04.2023</span>
<svg class="a" style="left:1265px;top:705.5px;" width="22" height="21" viewBox="0 0 22 21"><path d="M0.6 0.6 H13.6 V10.4 H6 L3 13.2 V10.4 H0.6 Z" fill="#f4f4f4"/><path d="M2.6 3 H11.6 M2.6 5.2 H11.6 M2.6 7.4 H11.6" stroke="#1b2d4a" stroke-width="0.9"/><circle cx="14.3" cy="14" r="6.4" fill="#1d2236" stroke="#6a7080" stroke-width="0.9"/></svg>
<span id="t81" class="t" style="left:1276.30px;top:714.83px;font-size:10.60px;color:#fff;font-weight:700;transform:scaleX(1.0159);">5</span>
</body></html>
